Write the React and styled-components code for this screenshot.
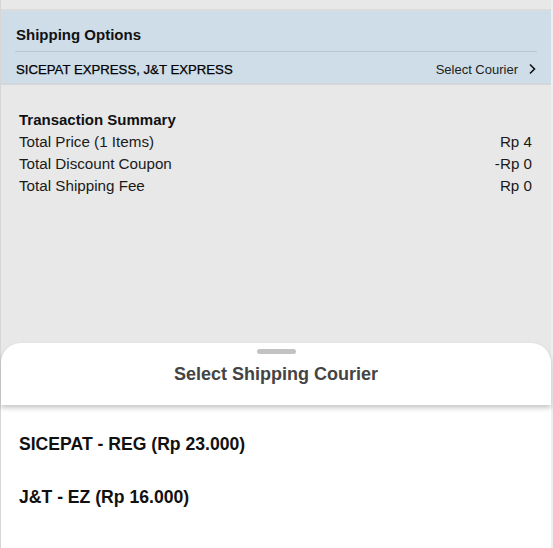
import styled, { createGlobalStyle } from 'styled-components';

const GlobalStyle = createGlobalStyle`
  html, body {
    margin: 0;
    padding: 0;
    background: #efefef;
    font-family: Arial, "Liberation Sans", sans-serif;
    overflow: hidden;
  }
`;

const couriers = [
  { name: 'SICEPAT - REG', price: 'Rp 23.000' },
  { name: 'J&T - EZ', price: 'Rp 16.000' },
];

const summary = [
  { label: 'Total Price (1 Items)', value: 'Rp 4' },
  { label: 'Total Discount Coupon', value: '-Rp 0' },
  { label: 'Total Shipping Fee', value: 'Rp 0' },
];

const App = () => {
  return (
    <>
      <GlobalStyle />
      <Page>
        <TopGap />
        <Shipping>
          <ShippingTitle>Shipping Options</ShippingTitle>
          <ShippingRow>
            <span>SICEPAT EXPRESS, J&amp;T EXPRESS</span>
            <SelectLink>
              Select Courier
              <svg width="10" height="12" viewBox="0 0 10 12">
                <path d="M3 1.5 L7.5 6 L3 10.5" fill="none" stroke="#111" strokeWidth="1.6" />
              </svg>
            </SelectLink>
          </ShippingRow>
        </Shipping>

        <Summary>
          <SummaryTitle>Transaction Summary</SummaryTitle>
          {summary.map((row) => (
            <SummaryRow key={row.label}>
              <span>{row.label}</span>
              <span>{row.value}</span>
            </SummaryRow>
          ))}
        </Summary>
      </Page>

      <Sheet>
        <SheetHeader>
          <Handle />
          <SheetTitle>Select Shipping Courier</SheetTitle>
        </SheetHeader>
        <CourierList>
          {couriers.map((c) => (
            <CourierItem key={c.name}>
              {c.name} ({c.price})
            </CourierItem>
          ))}
        </CourierList>
      </Sheet>
    </>
  );
};

const Page = styled.div`
  width: 550px;
  height: 548px;
  background: #e8e8e8;
  border-left: 1px solid #d6d6d6;
  display: flex;
  flex-direction: column;
`;

const TopGap = styled.div`
  height: 9px;
  border-bottom: 2px solid #d9dbdd;
`;

const Shipping = styled.div`
  background: #cedde8;
  padding: 0 14px 0 14px;
  border-bottom: 2px solid #d3d7db;
  height: 74px;
  box-sizing: border-box;
`;

const ShippingTitle = styled.div`
  font-size: 15px;
  font-weight: bold;
  color: #111;
  height: 40px;
  line-height: 47px;
  padding-left: 1px;
  border-bottom: 1px solid #b8c6d2;
`;

const ShippingRow = styled.div`
  display: flex;
  justify-content: space-between;
  align-items: center;
  height: 34px;
  font-size: 13px;
  color: #111;
  padding: 0 0 0 1px;

  & > span:first-child {
    font-size: 13.2px;
    color: #000;
    -webkit-text-stroke: 0.25px #000;
  }
`;

const SelectLink = styled.span`
  display: flex;
  align-items: center;
  gap: 9px;
  color: #222;
  padding-right: 0;
`;

const Summary = styled.div`
  padding: 24px 19px 0 18px;
`;

const SummaryTitle = styled.div`
  font-size: 15px;
  font-weight: bold;
  color: #111;
  line-height: 22px;
`;

const SummaryRow = styled.div`
  display: flex;
  justify-content: space-between;
  font-size: 15.2px;
  color: #1a1a1a;
  line-height: 22px;
`;

const Sheet = styled.div`
  position: fixed;
  left: 1px;
  bottom: 0;
  width: 550px;
  height: 205px;
  background: #fff;
  border-radius: 20px 20px 0 0;
  display: flex;
  flex-direction: column;
`;

const SheetHeader = styled.div`
  height: 62px;
  flex-shrink: 0;
  display: flex;
  flex-direction: column;
  align-items: center;
  border-radius: 20px 20px 0 0;
  box-shadow: 0 3px 5px rgba(0, 0, 0, 0.22);
  position: relative;
  z-index: 1;
`;

const Handle = styled.div`
  width: 39px;
  height: 5px;
  border-radius: 3px;
  background: #c2c2c2;
  margin-top: 6px;
`;

const SheetTitle = styled.div`
  font-size: 18px;
  font-weight: bold;
  color: #444;
  margin-top: 10px;
`;

const CourierList = styled.div`
  padding: 29px 18px 0;
  display: flex;
  flex-direction: column;
  gap: 33px;
`;

const CourierItem = styled.div`
  font-size: 17.6px;
  font-weight: bold;
  color: #111;
  line-height: 20px;
`;

export default App;
